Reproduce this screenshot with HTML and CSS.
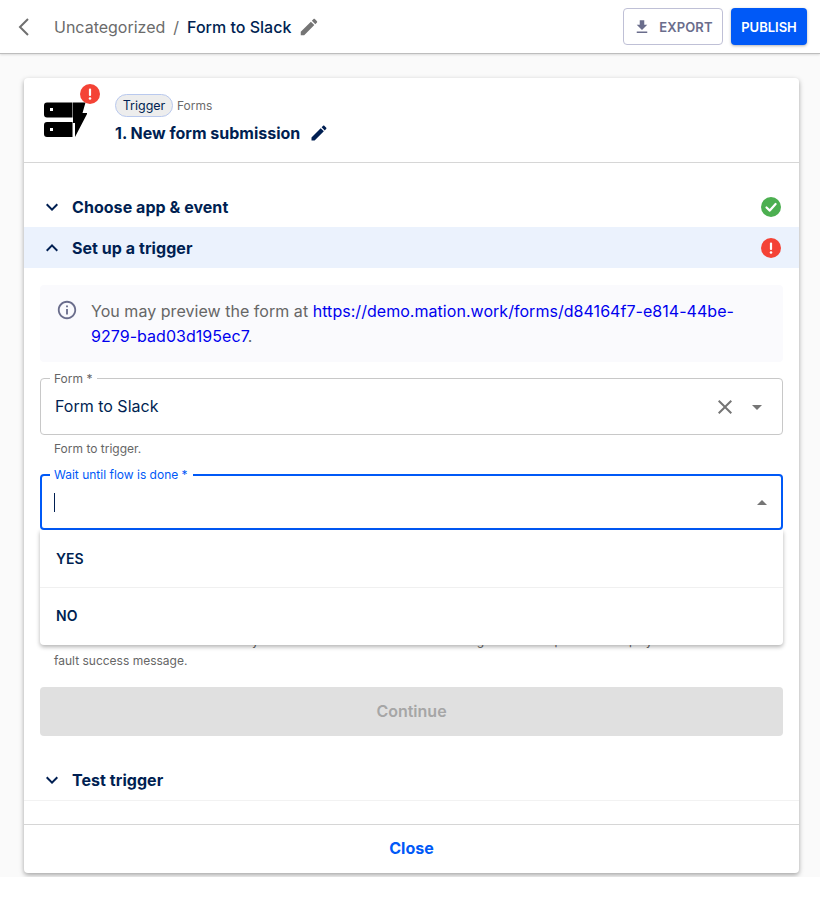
FILE: index.html
```html
<!DOCTYPE html>
<html lang="en">
<head>
<meta charset="utf-8">
<title>Form to Slack</title>
<link rel="stylesheet" href="styles.css">
</head>
<body>
<div class="page">
  <header class="topbar">
    <svg class="back" viewBox="0 0 12 20"><polyline points="10,2 2,10 10,18"/></svg>
    <nav class="crumbs">
      <span class="crumb-muted">Uncategorized</span>
      <span class="crumb-sep">/</span>
      <span class="crumb-current">Form to Slack</span>
      <svg class="icon-22 gray" viewBox="0 0 24 24"><path d="M3 17.25V21h3.75L17.81 9.94l-3.75-3.75L3 17.25zM20.71 7.04c.39-.39.39-1.02 0-1.41l-2.34-2.34c-.39-.39-1.02-.39-1.41 0l-1.83 1.83 3.75 3.75 1.83-1.83z"/></svg>
    </nav>
    <div class="actions">
      <button class="btn-export"><svg class="icon-18" viewBox="0 0 24 24"><path d="M19 9h-4V3H9v6H5l7 7 7-7zM5 18v2h14v-2H5z"/></svg>EXPORT</button>
      <button class="btn-publish">PUBLISH</button>
    </div>
  </header>

  <main class="canvas">
    <section class="card">
      <div class="card-head">
        <div class="logo-wrap">
          <svg class="logo" viewBox="0 0 43 35">
            <path fill-rule="evenodd" d="M3 .5h25.5v15H3a3 3 0 0 1-3-3v-9a3 3 0 0 1 3-3zM6 6v3h3V6z"/>
            <path fill-rule="evenodd" d="M3 20h25.5v15H3a3 3 0 0 1-3-3v-9a3 3 0 0 1 3-3zM6 26v3h3v-3z"/>
            <path d="M29 .5h12.500l-3 10.500h5L31 35V21h-2z"/>
          </svg>
          <svg class="logo-badge" viewBox="0 0 20 20"><circle cx="10" cy="10" r="10" fill="#f44336"/><rect x="8.9" y="4.5" width="2.2" height="7.5" rx="1" fill="#fff"/><circle cx="10" cy="14.5" r="1.3" fill="#fff"/></svg>
        </div>
        <div class="head-text">
          <div class="head-meta"><span class="chip">Trigger</span><span class="app-name">Forms</span></div>
          <div class="head-title"><span>1. New form submission</span>
            <svg class="icon-20 navy" viewBox="0 0 24 24"><path d="M3 17.25V21h3.75L17.81 9.94l-3.75-3.75L3 17.25zM20.71 7.04c.39-.39.39-1.02 0-1.41l-2.34-2.34c-.39-.39-1.02-.39-1.41 0l-1.83 1.83 3.75 3.75 1.83-1.83z"/></svg>
          </div>
        </div>
      </div>

      <div class="card-body">
        <div class="acc-row first">
          <svg class="icon-24 navy" viewBox="0 0 24 24"><path d="M16.59 8.59 12 13.17 7.41 8.59 6 10l6 6 6-6z"/></svg>
          <span class="acc-title">Choose app &amp; event</span>
          <svg class="status" viewBox="0 0 20 20"><circle cx="10" cy="10" r="10" fill="#4caf50"/><polyline points="5.5,10.500 8.8,13.600 14.600,7" fill="none" stroke="#fff" stroke-width="2.2" stroke-linecap="round" stroke-linejoin="round"/></svg>
        </div>
        <div class="acc-row active">
          <svg class="icon-24 navy" viewBox="0 0 24 24"><path d="M12 8l-6 6 1.41 1.41L12 10.83l4.59 4.58L18 14z"/></svg>
          <span class="acc-title">Set up a trigger</span>
          <svg class="status" viewBox="0 0 20 20"><circle cx="10" cy="10" r="10" fill="#f44336"/><rect x="8.9" y="4.5" width="2.2" height="7.5" rx="1" fill="#fff"/><circle cx="10" cy="14.5" r="1.3" fill="#fff"/></svg>
        </div>

        <div class="form-area">
          <div class="notice">
            <svg class="notice-icon" viewBox="0 0 24 24"><path d="M11 7h2v2h-2zm0 4h2v6h-2zm1-9C6.48 2 2 6.48 2 12s4.48 10 10 10 10-4.48 10-10S17.52 2 12 2zm0 18c-4.41 0-8-3.59-8-8s3.59-8 8-8 8 3.59 8 8-3.59 8-8 8z"/></svg>
            <p class="notice-text">You may preview the form at <a class="notice-link" href="#">https://demo.mation.work/forms/d84164f7-e814-44be-9279-bad03d195ec7</a>.</p>
          </div>

          <div class="field">
            <span class="field-label">Form *</span>
            <span class="field-value">Form to Slack</span>
            <svg class="icon-24 gray" viewBox="0 0 24 24"><path d="M19 6.41 17.59 5 12 10.59 6.41 5 5 6.41 10.59 12 5 17.59 6.41 19 12 13.41 17.59 19 19 17.59 13.41 12z"/></svg>
            <svg class="icon-24 gray" viewBox="0 0 24 24"><path d="M7 10l5 5 5-5z"/></svg>
          </div>
          <p class="helper helper-form">Form to trigger.</p>

          <div class="select-block">
            <div class="field focused">
              <span class="field-label">Wait until flow is done *</span>
              <span class="caret"></span>
              <svg class="icon-24 gray" viewBox="0 0 24 24"><path d="M7 15l5-5 5 5z"/></svg>
            </div>
            <p class="helper helper-wait">Decide whether or not the form may wait for the flow to end before showing the final output. It will display the de<br>fault success message.</p>
            <ul class="menu">
              <li class="menu-item yes">YES</li>
              <li class="menu-item no">NO</li>
            </ul>
          </div>

          <button class="btn-continue" disabled>Continue</button>
        </div>

        <div class="acc-row last">
          <svg class="icon-24 navy" viewBox="0 0 24 24"><path d="M16.59 8.59 12 13.17 7.41 8.59 6 10l6 6 6-6z"/></svg>
          <span class="acc-title">Test trigger</span>
        </div>
      </div>

      <div class="card-foot"><a class="close-link" href="#">Close</a></div>
    </section>
  </main>
</div>
</body>
</html>
```

FILE: styles.css
```css
* { box-sizing: border-box; }
html, body { margin: 0; padding: 0; background: #fff; }
body { font-family: Inter, "Liberation Sans", sans-serif; color: #001f52; }
svg { display: block; flex: none; fill: currentColor; }
p { margin: 0; }

.page { height: 877px; background: #fafafa; overflow: hidden; }

.topbar {
  height: 54px;
  display: flex;
  align-items: center;
  padding: 0 13px 0 18px;
  background: #fff;
  border-bottom: 1px solid #bdbdbd;
  box-shadow: 0 1px 2px rgba(0,0,0,.12);
}
.back { width: 12px; height: 20px; fill: none; stroke: #6f6f6f; stroke-width: 2; }
.crumbs { display: flex; align-items: center; margin-left: 24px; font-size: 16px; line-height: 24px; }
.crumb-muted { color: #6b6b6b; }
.crumb-sep { color: #6b6b6b; margin: 0 8px; }
.crumb-current { color: #001f52; font-weight: 500; margin-right: 7px; }
.actions { margin-left: auto; display: flex; gap: 8px; }
.btn-export, .btn-publish {
  height: 37px;
  border-radius: 4px;
  font: 600 13px/20px Inter, "Liberation Sans", sans-serif;
  display: flex;
  align-items: center;
  justify-content: center;
  padding: 0;
}
.btn-export { width: 100px; background: #fff; border: 1px solid #bfc0d6; color: #6a6d8c; gap: 8px; letter-spacing: .1px; }
.btn-publish { width: 76px; background: #0059f7; border: 0; color: #fff; box-shadow: 0 1px 3px rgba(0,0,0,.3); }

.canvas { padding: 24px 21px 0 24px; }
.card {
  height: 795px;
  background: #fff;
  border-radius: 4px;
  box-shadow: 0 2px 5px rgba(0,0,0,.35);
  display: flex;
  flex-direction: column;
}
.card-head {
  height: 85px;
  flex: none;
  display: flex;
  border-bottom: 1px solid #d6d6d6;
  padding: 16px 20px 0;
}
.logo-wrap { position: relative; width: 43px; height: 35px; margin-top: 8px; }
.logo { width: 43px; height: 35px; fill: #000; }
.logo-badge { position: absolute; left: 36px; top: -18px; width: 20px; height: 20px; }
.head-text { margin-left: 28px; }
.head-meta { display: flex; align-items: center; gap: 4px; }
.chip {
  height: 23px;
  width: 58px;
  display: flex;
  align-items: center;
  justify-content: center;
  font-size: 12.5px;
  color: #001f52;
  background: #ededed;
  border: 1px solid #b9c9ee;
  border-radius: 12px;
}
.app-name { font-size: 12px; color: #6b6b6b; }
.head-title { display: flex; align-items: center; gap: 9px; margin-top: 4px; font-size: 16px; font-weight: 700; line-height: 24px; color: #001f52; }

.card-body { flex: 1; display: flex; flex-direction: column; padding-top: 23px; }
.acc-row { height: 41px; flex: none; display: flex; align-items: center; padding: 0 18px 0 16px; }
.acc-row .acc-title { font-size: 16px; font-weight: 700; margin-left: 8px; color: #001f52; letter-spacing: .05px; }
.acc-row .status { width: 20px; height: 20px; margin-left: auto; }
.acc-row.active { background: #ebf2fd; }
.acc-row.last { border-bottom: 1px solid #f2f2f2; height: 42px; }

.icon-18 { width: 18px; height: 18px; }
.icon-20 { width: 20px; height: 20px; }
.icon-22 { width: 22px; height: 22px; }
.icon-24 { width: 24px; height: 24px; }
.gray { color: #757575; }
.navy { color: #001f52; }

.form-area { padding: 17px 16px 23px; }
.notice {
  height: 77px;
  display: flex;
  background: #fafafd;
  border-radius: 4px;
  padding: 14px 16px;
}
.notice-icon { width: 22px; height: 22px; color: #6a6d8c; }
.notice-text { margin-left: 13px; font-size: 16px; line-height: 25px; color: #666; width: 660px; letter-spacing: .04px; }
.notice-link { color: #0000ee; text-decoration: none; }

.field {
  position: relative;
  height: 57px;
  margin-top: 16px;
  display: flex;
  align-items: center;
  gap: 8px;
  padding: 0 13px 0 14px;
  border: 1px solid #c8c8c8;
  border-radius: 4px;
}
.field-label {
  position: absolute;
  left: 9px;
  top: -7px;
  padding: 0 5px 0 4px;
  background: #fff;
  font-size: 12px;
  line-height: 14px;
  color: #666;
}
.field-value { flex: 1; font-size: 16px; color: #001f52; padding-bottom: 2px; }
.field.focused { height: 56px; margin-top: 0; border: 2px solid #0059f7; justify-content: flex-end; padding: 0 7px 0 12px; }
.field.focused .field-label { color: #0059f7; left: 8px; top: -8px; }
.caret { width: 1px; height: 19px; background: #001f52; margin-right: auto; }
.helper { font-size: 12px; line-height: 18px; color: #666; padding: 0 14px; }
.helper-form { margin-top: 5px; margin-bottom: 16px; }

.select-block { position: relative; }
.helper-wait { margin-top: 101px; line-height: 20px; white-space: nowrap; overflow: hidden; }
.menu {
  position: absolute;
  left: 0;
  right: 0;
  top: 56px;
  margin: 0;
  padding: 0;
  list-style: none;
  background: #fff;
  border-radius: 0 0 4px 4px;
  box-shadow: 0 2px 4px rgba(0,0,0,.3);
}
.menu-item { display: flex; align-items: center; padding: 0 16px; font-size: 14px; font-weight: 600; color: #001f52; }
.yes { height: 57px; }
.no { height: 58px; border-top: 1px solid #f0f0f0; padding-bottom: 2px; }

.btn-continue {
  display: block;
  width: 100%;
  height: 49px;
  margin-top: 16px;
  padding: 0 0 2px;
  border: 0;
  border-radius: 4px;
  background: #e0e0e0;
  color: #a6a6a6;
  font: 600 16px/24px Inter, "Liberation Sans", sans-serif;
}

.card-foot {
  height: 49px;
  flex: none;
  display: flex;
  align-items: center;
  justify-content: center;
  padding-bottom: 2px;
  border-top: 1px solid #d6d6d6;
}
.close-link { color: #0059f7; font-size: 16px; font-weight: 700; text-decoration: none; }
```
